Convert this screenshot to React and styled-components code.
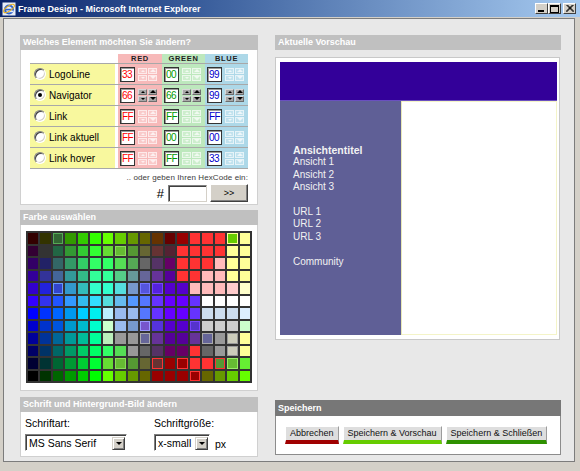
import React from "react";
import styled, { createGlobalStyle } from "styled-components";

const Global = createGlobalStyle`
  html, body { margin: 0; padding: 0; background: #D4D0C8; }
  body { font-family: "Liberation Sans", Arial, sans-serif; }
  * { box-sizing: border-box; }
`;

const Window = styled.div`
  width: 580px;
  height: 471px;
  display: flex;
  flex-direction: column;
  background: #D4D0C8;
  overflow: hidden;
`;

const TitleBar = styled.div`
  height: 17px;
  flex: none;
  display: flex;
  align-items: center;
  padding: 0 4px 0 2px;
  background: linear-gradient(to right, #0A246A 0%, #3A5E9C 35%, #A6CAF0 100%);
`;

const TitleText = styled.span`
  margin-left: 2px;
  color: #fff;
  font-weight: bold;
  font-size: 9px;
  flex: 1;
`;

const WinButtons = styled.div`
  display: flex;
  align-items: center;
`;

const WinBtn = styled.div`
  width: 13px;
  height: 11px;
  margin-left: ${(p) => (p.$gap ? "2px" : "0")};
  background: #D4D0C8;
  border: 1px solid;
  border-color: #fff #404040 #404040 #fff;
  display: flex;
  align-items: center;
  justify-content: center;
`;

const Frame = styled.div`
  flex: 1;
  padding: 1px 5px 9px 3px;
  display: flex;
`;

const Content = styled.div`
  flex: 1;
  border: 1px solid #7C7C7C;
  background: #E8E8E8;
  padding: 16px 0 0 16px;
  display: flex;
  align-items: flex-start;
`;

const LeftCol = styled.div`
  width: 238px;
  display: flex;
  flex-direction: column;
`;

const RightCol = styled.div`
  width: 286px;
  height: 420px;
  margin-left: 17px;
  display: flex;
  flex-direction: column;
`;

const PanelHeader = styled.div`
  height: ${(p) => p.$h || 15}px;
  line-height: ${(p) => p.$h || 15}px;
  background: ${(p) => (p.$dark ? "#777777" : "#C0C0C0")};
  color: #fff;
  font-weight: bold;
  font-size: 9px;
  padding-left: 3px;
  margin-top: ${(p) => p.$mt || 0}px;
`;

const PanelBody = styled.div`
  height: ${(p) => p.$h}px;
  background: #fff;
  border: 1px solid ${(p) => (p.$dark ? "#8C8C8C" : "#D0D0D0")};
  border-top: none;
  padding: ${(p) => p.$pad || "0"};
`;

/* ---------- element table ---------- */
const GRID_COLS = "85px 3px 44px 43px 43px";

const HeadRow = styled.div`
  display: grid;
  grid-template-columns: ${GRID_COLS};
  height: 9px;
`;

const HeadCell = styled.div`
  background: ${(p) => p.$bg || "transparent"};
  font-size: 7.5px;
  font-weight: bold;
  letter-spacing: 0.7px;
  line-height: 9px;
  text-align: center;
  color: #222;
`;

const TableBody = styled.div`
  border-top: 1px solid #A8A8A8;
`;

const Row = styled.div`
  display: grid;
  grid-template-columns: ${GRID_COLS};
  height: 21px;
  border-bottom: 1px solid #A8A8A8;
`;

const LabelCell = styled.label`
  background: #F8F89E;
  display: flex;
  align-items: center;
  padding-left: 4px;
  gap: 3px;
  font-size: 10px;
  color: #000;
`;

const Radio = styled.span`
  width: 12px;
  height: 12px;
  border-radius: 50%;
  background: #fff;
  border: 1px solid;
  border-color: #808080 #fff #fff #808080;
  box-shadow: inset 1px 1px 0 #404040, inset -1px -1px 0 #D4D0C8;
  display: flex;
  align-items: center;
  justify-content: center;
  &::after {
    content: "";
    width: 4px;
    height: 4px;
    border-radius: 50%;
    background: ${(p) => (p.$checked ? "#000" : "transparent")};
  }
`;

const GapCell = styled.div`
  background: #fff;
`;

const ColorCell = styled.div`
  background: ${(p) => p.$bg};
  display: flex;
  align-items: center;
  padding-left: 2px;
  gap: 3px;
`;

const HexBox = styled.div`
  width: 15px;
  height: 15px;
  flex: none;
  background: #fff;
  border: 1px solid #333;
  box-shadow: inset 1px 1px 0 #9a9a9a;
  color: ${(p) => p.$color};
  font-size: 10px;
  line-height: 13px;
  padding-left: 1px;
  letter-spacing: -0.6px;
  white-space: nowrap;
  overflow: hidden;
`;

const Spinner = styled.div`
  display: grid;
  grid-template-columns: 9px 9px;
  grid-template-rows: 6px 6px;
  gap: 1px;
`;

const SpinBtn = styled.div`
  background: ${(p) => (p.$active ? "#A9A9A9" : "rgba(255,255,255,0.25)")};
  border: 1px solid;
  border-color: ${(p) =>
    p.$active
      ? "#D8D8D8 #6E6E6E #6E6E6E #D8D8D8"
      : "rgba(255,255,255,0.6)"};
  display: flex;
  align-items: center;
  justify-content: center;
`;

const Tri = styled.span`
  width: 0;
  height: 0;
  border-left: ${(p) => p.$s}px solid transparent;
  border-right: ${(p) => p.$s}px solid transparent;
  ${(p) => (p.$down ? "border-top" : "border-bottom")}: ${(p) => p.$s}px solid
    ${(p) => (p.$active ? "#000" : "rgba(255,255,255,0.7)")};
`;

const Hint = styled.div`
  margin-top: 4px;
  text-align: right;
  font-size: 8px;
  line-height: 10px;
  color: #3a3a3a;
  letter-spacing: 0.1px;
`;

const HexRow = styled.div`
  display: flex;
  justify-content: flex-end;
  align-items: center;
  gap: 3px;
  margin-top: 1px;
`;

const Hash = styled.span`
  font-size: 13px;
  color: #000;
  margin-right: 1px;
`;

const HexInput = styled.div`
  width: 39px;
  height: 17px;
  background: #fff;
  border: 1px solid;
  border-color: #808080 #D4D0C8 #D4D0C8 #808080;
  box-shadow: inset 1px 1px 0 #404040;
`;

const GoButton = styled.div`
  width: 38px;
  height: 18px;
  background: #D4D0C8;
  border: 1px solid;
  border-color: #fff #404040 #404040 #fff;
  box-shadow: inset -1px -1px 0 #808080;
  font-size: 9px;
  display: flex;
  align-items: center;
  justify-content: center;
  color: #000;
`;

/* ---------- color grid ---------- */
const ColorGrid = styled.div`
  width: 226px;
  height: 152px;
  background: #333;
  padding: 2px;
  display: grid;
  grid-template-columns: repeat(18, 1fr);
  grid-template-rows: repeat(12, 1fr);
  gap: 2px;
`;

const Swatch = styled.div`
  background: ${(p) => p.$c};
  box-shadow: ${(p) => (p.$b ? `inset 0 0 0 1px ${p.$b}` : "none")};
`;

/* ---------- font panel ---------- */
const FontRow = styled.div`
  display: flex;
  padding: 5px 0 0 4px;
`;

const Field = styled.div`
  width: ${(p) => p.$w}px;
  display: flex;
  flex-direction: column;
`;

const FieldLabel = styled.div`
  font-size: 10.5px;
  line-height: 13px;
  color: #000;
  margin-bottom: 4px;
`;

const SelectLine = styled.div`
  display: flex;
  align-items: flex-end;
`;

const Select = styled.div`
  width: ${(p) => p.$w}px;
  height: 17px;
  background: #fff;
  border: 1px solid;
  border-color: #808080 #fff #fff #808080;
  box-shadow: inset 1px 1px 0 #404040;
  display: flex;
  align-items: center;
  padding: 1px 1px 0 3px;
  font-size: 10.5px;
  color: #000;
`;

const SelectText = styled.span`
  flex: 1;
`;

const DropBtn = styled.div`
  width: 13px;
  height: 13px;
  background: #D4D0C8;
  border: 1px solid;
  border-color: #D4D0C8 #404040 #404040 #D4D0C8;
  box-shadow: inset 1px 1px 0 #fff, inset -1px -1px 0 #808080;
  display: flex;
  align-items: center;
  justify-content: center;
  &::after {
    content: "";
    border-left: 3px solid transparent;
    border-right: 3px solid transparent;
    border-top: 3px solid #000;
  }
`;

const Unit = styled.span`
  font-size: 10.5px;
  margin-left: 5px;
  line-height: 13px;
`;

/* ---------- preview ---------- */
const PreviewBox = styled.div`
  margin-top: 7px;
  width: 285px;
  height: 283px;
  background: #fff;
  border: 1px solid #C8C8C8;
  padding: 4px 2px 0 4px;
  display: flex;
  flex-direction: column;
`;

const Banner = styled.div`
  height: 39px;
  background: #330099;
  border-bottom: 1px solid #6A4FC0;
`;

const PreviewMain = styled.div`
  height: 234px;
  display: flex;
`;

const Sidebar = styled.div`
  width: 122px;
  background: #5F5F96;
  border-right: 1px solid #E8E8B8;
  padding: 43px 0 0 13px;
  color: #F2F2F2;
  font-size: 10px;
  line-height: 12.4px;
`;

const SideTitle = styled.div`
  font-weight: bold;
  font-size: 10.5px;
`;

const SideItem = styled.div`
  margin-top: ${(p) => (p.$gapBefore ? "12.4px" : "0")};
`;

const PreviewPane = styled.div`
  flex: 1;
  border: 1px solid #F4F4C8;
  border-left: none;
`;

/* ---------- save ---------- */
const SavePanel = styled.div`
  margin-top: auto;
`;

const ButtonRow = styled.div`
  display: flex;
  gap: 4px;
`;

const SaveButton = styled.div`
  height: 18px;
  padding: 0 4px;
  background: #DEDEDE;
  border-top: 1px solid #fff;
  border-left: 1px solid #fff;
  border-right: 1px solid #9C9C9C;
  border-bottom: 4px solid ${(p) => p.$color};
  font-size: 9px;
  line-height: 13px;
  color: #111;
  white-space: nowrap;
`;

/* ---------- data ---------- */
const ELEMENTS = [
  { name: "LogoLine", r: "33", g: "00", b: "99" },
  { name: "Navigator", r: "66", g: "66", b: "99", active: true },
  { name: "Link", r: "FF", g: "FF", b: "FF" },
  { name: "Link aktuell", r: "FF", g: "00", b: "00" },
  { name: "Link hover", r: "FF", g: "FF", b: "33" },
];

const CH = [
  { key: "r", label: "RED", bg: "#F7B9B9", fg: "#FF0000" },
  { key: "g", label: "GREEN", bg: "#BDE8BD", fg: "#009900" },
  { key: "b", label: "BLUE", bg: "#ADD8E8", fg: "#0000CC" },
];

const PALETTE = [
  "330000 333300 336633 339900 33CC00 33FF00 66FF00 66CC00 669900 666600 663300 660000 990000 FF3333 FF3333 FF3333 66CC00 FFFF99",
  "330033 333333 226644 339933 33CC33 33FF33 66DD33 66BB33 559933 666633 663333 552233 FF3333 FF3333 FF3333 FF3333 FFFF99 FFFF99",
  "330066 222266 336666 339966 33CC66 33FF66 33FF66 55DD55 55AA55 666666 553366 660066 FF3333 FF3333 FF3333 FFBBBB FFFF99 FFFF99",
  "330099 333399 446699 339999 33BB88 33FF99 33FF99 55CC88 669999 666699 663399 550099 FF3333 FF3333 FFBBBB FFBBBB FFFF99 FFFF99",
  "3300CC 2222DD 3344CC 3399CC 33BBBB 33FFCC 33FFCC 55DDDD 7799CC 5555DD 5522DD 5500CC 5500CC FFBBBB FFBBBB FFBBBB FFCCCC FFFFCC",
  "3300FF 3333EE 2255FF 3399FF 33BBEE 33DDFF 55DDDD 66BBEE 5599FF 5577FF 6633FF 6600FF 6600FF 6633FF FFFFFF FFFFFF FFFFFF FFFFFF",
  "0000FF 0033FF 0066FF 0099EE 00CCFF 00EEEE BBEEFF 99BBEE 99BBEE 5577FF 6633FF 6600FF 6600FF 6633FF CCDDEE CCDDEE CCDDEE DDEEFF",
  "0000CC 0033CC 0055DD 0099CC 00BBCC 00FFCC CCFFCC 99BBEE 7799CC 7755CC 5533DD 5500CC 5500CC 5533CC CCCCCC CCCCCC CCCCCC CCFFCC",
  "000099 003399 006699 009999 00BB99 00FF99 BBEEBB 999999 999999 666699 663399 550099 550099 663399 666699 999999 CCCCBB FFFF99",
  "000066 003366 006666 009966 00CC66 00FF66 33FF66 55DD55 999999 666666 553366 660066 660066 FF3333 666666 999999 CCCCBB FFFF99",
  "000033 003333 006633 009933 00CC33 00FF33 66DD33 66BB33 559933 666633 663333 990000 990000 FF3333 FF3333 559933 66BB33 66EE33",
  "000000 003300 006600 009900 00CC00 00FF00 66FF00 66CC00 669900 666600 990000 990000 990000 990000 666600 669900 66CC00 66FF00",
].map((r) => r.split(" ").map((h) => "#" + h));

const MARKS = {
  "0-2": "#55AA55",
  "0-16": "#FFFF99",
  "1-7": "#88DD55",
  "4-2": "#6699FF",
  "4-9": "#7777FF",
  "4-10": "#7744FF",
  "7-9": "#9999FF",
  "7-13": "#7744FF",
  "8-9": "#AAAAAA",
  "8-14": "#AAAAAA",
  "8-16": "#999999",
  "9-16": "#999999",
  "10-7": "#88DD55",
  "10-10": "#FF3333",
  "10-12": "#FF3333",
  "10-15": "#FF3333",
  "10-16": "#99EE66",
  "11-13": "#FF3333",
};

/* ---------- small pieces ---------- */
const SpinnerGroup = ({ active }) => (
  <Spinner>
    <SpinBtn $active={active}>
      <Tri $s={2} $active={active} />
    </SpinBtn>
    <SpinBtn $active={active}>
      <Tri $s={3} $active={active} />
    </SpinBtn>
    <SpinBtn $active={active}>
      <Tri $s={2} $down $active={active} />
    </SpinBtn>
    <SpinBtn $active={active}>
      <Tri $s={3} $down $active={active} />
    </SpinBtn>
  </Spinner>
);

const IEIcon = () => (
  <svg width="14" height="14" viewBox="0 0 14 14">
    <rect x="0.5" y="0.5" width="13" height="13" fill="#E8EEF8" />
    <circle cx="7" cy="7.5" r="4" fill="none" stroke="#2F64D0" strokeWidth="2" />
    <rect x="3.5" y="6.8" width="7" height="1.6" fill="#2F64D0" />
    <rect x="8.5" y="8.6" width="3" height="1.6" fill="#E8EEF8" />
    <ellipse
      cx="7"
      cy="6.5"
      rx="6.3"
      ry="2.4"
      fill="none"
      stroke="#E8B020"
      strokeWidth="1"
      transform="rotate(-35 7 6.5)"
    />
  </svg>
);

export default function App() {
  return (
    <>
      <Global />
      <Window>
        <TitleBar>
          <IEIcon />
          <TitleText>Frame Design - Microsoft Internet Explorer</TitleText>
          <WinButtons>
            <WinBtn>
              <svg width="7" height="7" viewBox="0 0 7 7">
                <rect x="0" y="5" width="6" height="2" fill="#000" />
              </svg>
            </WinBtn>
            <WinBtn>
              <svg width="9" height="8" viewBox="0 0 9 8">
                <rect x="0.5" y="0.5" width="8" height="7" fill="none" stroke="#000" />
                <rect x="0" y="0" width="9" height="2" fill="#000" />
              </svg>
            </WinBtn>
            <WinBtn $gap>
              <svg width="8" height="7" viewBox="0 0 8 7">
                <path d="M0.5 0 L7.5 7 M7.5 0 L0.5 7 M1.5 0 L8 6.5 M6.5 0 L0 6.5" stroke="#000" strokeWidth="1" />
              </svg>
            </WinBtn>
          </WinButtons>
        </TitleBar>

        <Frame>
          <Content>
            <LeftCol>
              <PanelHeader>Welches Element möchten Sie ändern?</PanelHeader>
              <PanelBody $h={155} $pad="4px 9px 0 9px">
                <HeadRow>
                  <HeadCell />
                  <HeadCell />
                  {CH.map((c) => (
                    <HeadCell key={c.key} $bg={c.bg}>
                      {c.label}
                    </HeadCell>
                  ))}
                </HeadRow>
                <TableBody>
                  {ELEMENTS.map((el) => (
                    <Row key={el.name}>
                      <LabelCell>
                        <Radio $checked={el.active} />
                        <span>{el.name}</span>
                      </LabelCell>
                      <GapCell />
                      {CH.map((c) => (
                        <ColorCell key={c.key} $bg={c.bg}>
                          <HexBox $color={c.fg}>{el[c.key]}</HexBox>
                          <SpinnerGroup active={el.active} />
                        </ColorCell>
                      ))}
                    </Row>
                  ))}
                </TableBody>
                <Hint>.. oder geben Ihren HexCode ein:</Hint>
                <HexRow>
                  <Hash>#</Hash>
                  <HexInput />
                  <GoButton>&gt;&gt;</GoButton>
                </HexRow>
              </PanelBody>

              <PanelHeader $mt={5}>Farbe auswählen</PanelHeader>
              <PanelBody $h={166} $pad="6px 0 0 5px">
                <ColorGrid>
                  {PALETTE.map((row, ri) =>
                    row.map((c, ci) => (
                      <Swatch key={ri + "-" + ci} $c={c} $b={MARKS[ri + "-" + ci]} />
                    ))
                  )}
                </ColorGrid>
              </PanelBody>

              <PanelHeader $mt={6}>Schrift und Hintergrund-Bild ändern</PanelHeader>
              <PanelBody $h={45}>
                <FontRow>
                  <Field $w={129}>
                    <FieldLabel>Schriftart:</FieldLabel>
                    <Select $w={102}>
                      <SelectText>MS Sans Serif</SelectText>
                      <DropBtn />
                    </Select>
                  </Field>
                  <Field $w={90}>
                    <FieldLabel>Schriftgröße:</FieldLabel>
                    <SelectLine>
                      <Select $w={56}>
                        <SelectText>x-small</SelectText>
                        <DropBtn />
                      </Select>
                      <Unit>px</Unit>
                    </SelectLine>
                  </Field>
                </FontRow>
              </PanelBody>
            </LeftCol>

            <RightCol>
              <PanelHeader>Aktuelle Vorschau</PanelHeader>
              <PreviewBox>
                <Banner />
                <PreviewMain>
                  <Sidebar>
                    <SideTitle>Ansichtentitel</SideTitle>
                    <SideItem>Ansicht 1</SideItem>
                    <SideItem>Ansicht 2</SideItem>
                    <SideItem>Ansicht 3</SideItem>
                    <SideItem $gapBefore>URL 1</SideItem>
                    <SideItem>URL 2</SideItem>
                    <SideItem>URL 3</SideItem>
                    <SideItem $gapBefore>Community</SideItem>
                  </Sidebar>
                  <PreviewPane />
                </PreviewMain>
              </PreviewBox>

              <SavePanel>
                <PanelHeader $dark $h={16}>Speichern</PanelHeader>
                <PanelBody $dark $h={39} $pad="10px 0 0 9px">
                  <ButtonRow>
                    <SaveButton $color="#A00000">Abbrechen</SaveButton>
                    <SaveButton $color="#66CC00">Speichern &amp; Vorschau</SaveButton>
                    <SaveButton $color="#2E9100">Speichern &amp; Schließen</SaveButton>
                  </ButtonRow>
                </PanelBody>
              </SavePanel>
            </RightCol>
          </Content>
        </Frame>
      </Window>
    </>
  );
}
